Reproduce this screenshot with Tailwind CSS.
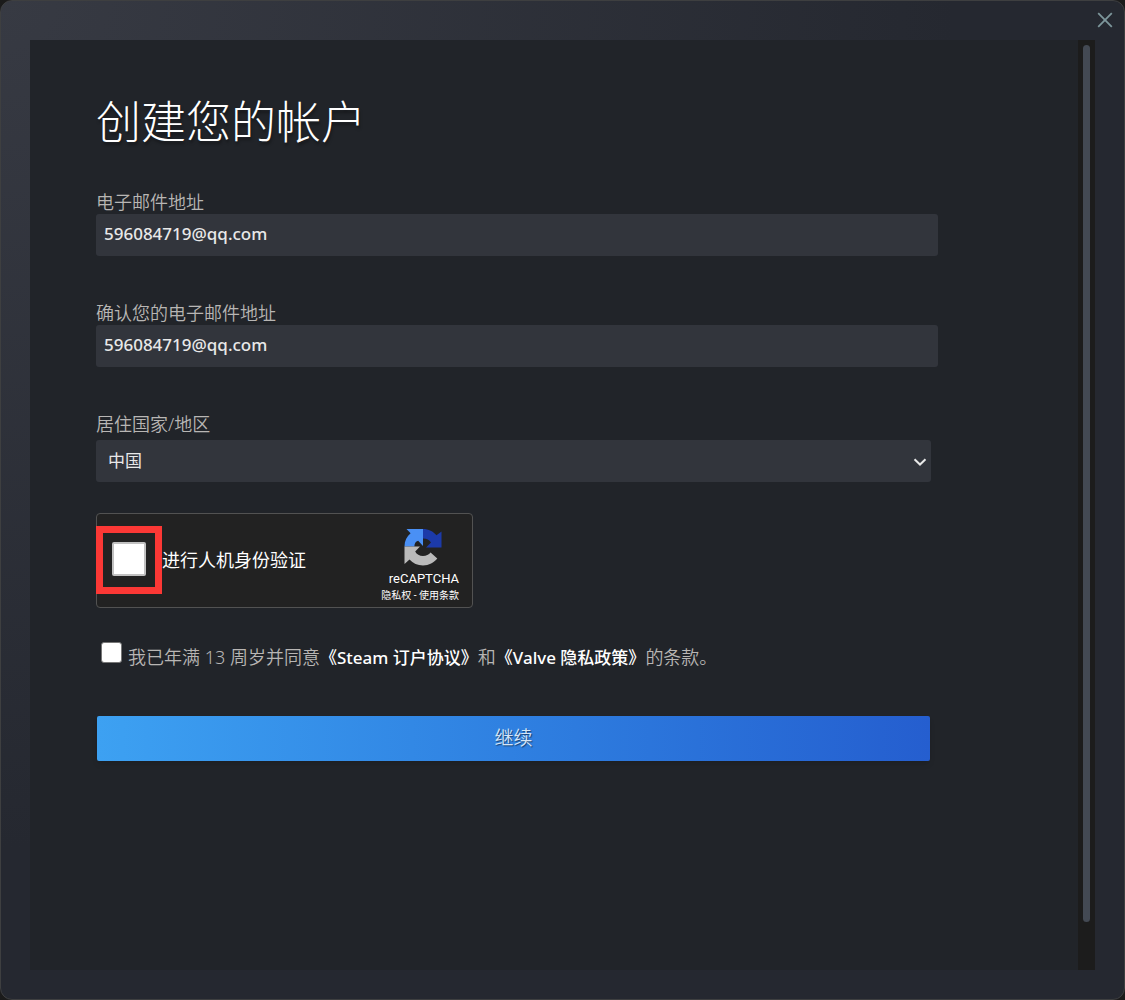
<!DOCTYPE html>
<html lang="zh-CN">
<head>
<meta charset="utf-8">
<meta name="viewport" content="width=device-width, initial-scale=1">
<title>创建您的帐户</title>
<script src="https://cdn.jsdelivr.net/npm/@tailwindcss/browser@4"></script>
</head>
<body class="bg-[#1b1b1b] font-['Noto_Sans','Noto_Sans_CJK_SC',sans-serif]">
<div class="flex min-h-screen flex-col rounded-xl border border-[#3e3f40] bg-radial-[at_0%_0%] from-[#373a43] to-[#252830] to-60% px-[29px] pb-[29px]">
  <header class="-mr-5 flex h-[39px] items-center justify-end pb-[2px]">
    <button type="button" aria-label="关闭" class="text-[#7d969b]">
      <svg class="size-5" viewBox="0 0 20 20" fill="none" stroke="currentColor" stroke-width="1.8"><path d="M3.200 3.200 16.800 16.800M16.800 3.200 3.200 16.800"/></svg>
    </button>
  </header>
  <div class="flex grow bg-[#212429]">
    <main class="grow pt-[50px] pr-[140px] pl-[66px]">
      <h1 class="text-[45px] leading-[64px] font-light text-white [text-shadow:1px_3px_3px_rgb(0_0_0/0.35)]">创建您的帐户</h1>
      <form class="pt-9">
        <div class="mb-[45px]">
          <label for="email" class="block text-lg leading-6 font-[350] text-[#b8b6b4]">电子邮件地址</label>
          <input id="email" type="email" value="596084719@qq.com" class="block h-[42px] w-full rounded-[3px] bg-[#32353c] px-2 pb-[3px] text-[17px] font-medium text-[#e8e8e8] outline-none">
        </div>
        <div class="mb-[45px]">
          <label for="reenter" class="block text-lg leading-6 font-[350] text-[#b8b6b4]">确认您的电子邮件地址</label>
          <input id="reenter" type="email" value="596084719@qq.com" class="block h-[42px] w-full rounded-[3px] bg-[#32353c] px-2 pb-[3px] text-[17px] font-medium text-[#e8e8e8] outline-none">
        </div>
        <div class="mr-[7px]">
          <label for="country" class="mb-1 block text-lg leading-6 font-[350] text-[#b8b6b4]">居住国家/地区</label>
          <div class="relative">
            <select id="country" class="block h-[42px] w-full appearance-none rounded-[3px] bg-[#32353c] px-3 text-[17px] text-[#e8e8e8] outline-none"><option>中国</option></select>
            <svg class="pointer-events-none absolute top-4 right-1 h-3 w-[14px]" viewBox="0 0 14 12" fill="none" stroke="#e8e8e8" stroke-width="2"><path d="M1.5 3.2 7 8.5 12.500 3.200"/></svg>
          </div>
        </div>
        <div class="mt-[31px] flex h-[95px] w-[377px] items-center justify-between rounded-[4px] border border-[#525252] bg-[#222] pb-[2px]">
          <label class="-ml-px flex items-center text-lg text-white">
            <span class="flex h-[68px] w-[66px] items-center justify-center border-7 border-[#fc3835] pb-px">
              <input type="checkbox" class="size-[34px] appearance-none rounded-[2px] border-2 border-[#c1c1c1] bg-white">
            </span>
            进行人机身份验证
          </label>
          <div class="mr-[13px] flex flex-col items-end pt-3 font-['Roboto','Noto_Sans_CJK_SC',sans-serif] text-white">
            <svg class="mr-4 mb-1 size-10" viewBox="0 0 40 40">
              <path d="M1.500 19.500C1.500 14 3.700 9.600 7.600 6.300L3.500 2H20v17l-4.800-5.300C12.500 14.500 11.400 16.500 11.400 19.500Z" fill="#4a90f5"/>
              <path d="M20 2c5.600 0 10.200 2.300 13.500 6.300L38.500 4.500V20.500H23l5-5C26.300 12.800 24 11.500 20 11.400Z" fill="#1c3aa9"/>
              <path d="M1.500 19.500H17l-4.800 5C13.600 27.300 16.500 29 20 29c3.300 0 5.700-1.200 7.600-3.400l6.700 6C30.900 35.800 26 38.500 20 38.500c-5.400 0-10-2.100-13.500-6L1.500 37Z" fill="#bababa"/>
            </svg>
            <span class="text-[13px] leading-4">reCAPTCHA</span>
            <span class="text-[10px] leading-[18px]"><a href="#">隐私权</a> - <a href="#">使用条款</a></span>
          </div>
        </div>
        <div class="mt-8 flex items-start gap-[6px] pl-[5px]">
          <input id="agree" type="checkbox" class="mt-[2px] size-[21px] shrink-0 appearance-none rounded-[3px] border border-[#767676] bg-white">
          <label for="agree" class="mt-[5px] text-lg leading-6 font-[350] text-[#b8b6b4]">我已年满 13 周岁并同意<a href="#" class="text-[17px] font-medium text-white">《Steam 订户协议》</a>和<a href="#" class="text-[17px] font-medium text-white">《Valve 隐私政策》</a>的条款。</label>
        </div>
        <button type="submit" class="mt-[46px] mr-2 ml-px block h-[45px] w-[calc(100%-9px)] rounded-[2px] bg-linear-to-r from-[#3da1f2] to-[#255ecf] text-[19px] font-[350] text-[#d5e5f8] shadow-md [text-shadow:1px_1px_1px_rgb(0_0_0/0.5)]">继续</button>
      </form>
    </main>
    <div class="flex w-[17px] flex-col items-center bg-[#1c1c1c] pt-[5px] pb-12">
      <div class="w-[7px] grow rounded-full bg-[#434953]"></div>
    </div>
  </div>
</div>
</body>
</html>
